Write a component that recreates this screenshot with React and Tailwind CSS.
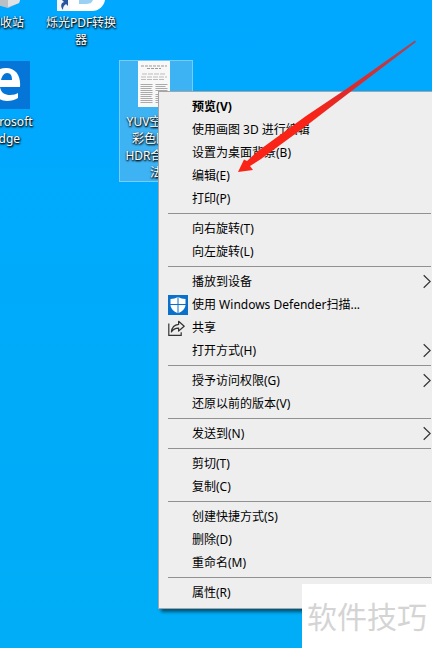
const groups = [
  [
    { label: '预览(V)', bold: true },
    { label: '使用画图 3D 进行编辑' },
    { label: '设置为桌面背景(B)' },
    { label: '编辑(E)' },
    { label: '打印(P)' },
  ],
  [{ label: '向右旋转(T)' }, { label: '向左旋转(L)' }],
  [
    { label: '播放到设备', sub: true },
    { label: '使用 Windows Defender扫描...', icon: 'shield' },
    { label: '共享', icon: 'share' },
    { label: '打开方式(H)', sub: true },
  ],
  [{ label: '授予访问权限(G)', sub: true }, { label: '还原以前的版本(V)' }],
  [{ label: '发送到(N)', sub: true }],
  [{ label: '剪切(T)' }, { label: '复制(C)' }],
  [{ label: '创建快捷方式(S)' }, { label: '删除(D)' }, { label: '重命名(M)' }],
  [{ label: '属性(R)' }],
];

function ShieldIcon() {
  return (
    <svg className="h-5 w-5" viewBox="0 0 20 20" aria-hidden="true">
      <rect width="20" height="20" fill="#0b70c9" />
      <path d="M10 1.800C7.800 3.500 5.300 4 2.500 4v5.500c0 4 3 6.800 7.500 8.800 4.500-2 7.500-4.800 7.500-8.800V4C14.700 4 12.200 3.500 10 1.800z" fill="#fff" />
      <path d="M10 1v18M2 9.500h16" stroke="#0b70c9" strokeWidth="1" />
    </svg>
  );
}

function ShareIcon() {
  return (
    <svg className="h-5 w-5" viewBox="0 0 20 20" fill="none" stroke="#333" strokeWidth="1.200" aria-hidden="true">
      <path d="M.8 5.500v11.900h12.400v-3.200" />
      <path d="M10.600 3.300l5.600 5-5.600 4.700v-2.900c-3.300-.1-5.600 1.200-7.200 3.800.5-4.400 3.300-7.100 7.200-7.500z" strokeLinejoin="round" />
    </svg>
  );
}

function Chevron() {
  return (
    <svg className="h-4 w-2" viewBox="0 0 8 16" fill="none" stroke="#333" strokeWidth="1.200" aria-hidden="true">
      <path d="M.7 1.300l6.500 6.200-6.500 6.200" />
    </svg>
  );
}

function MenuItem({ label, bold, icon, sub }) {
  return (
    <li role="none">
      <button
        type="button"
        role="menuitem"
        className={`flex h-[23px] w-full items-center pl-[9px] pr-px text-left ${bold ? 'font-bold' : ''}`}
      >
        <span className="mr-1 flex w-5 justify-center">
          {icon === 'shield' && <ShieldIcon />}
          {icon === 'share' && <ShareIcon />}
        </span>
        <span className="grow whitespace-nowrap">{label}</span>
        {sub && <Chevron />}
      </button>
    </li>
  );
}

function IconLabel({ lines }) {
  return (
    <span className="block whitespace-nowrap text-center text-[12px] leading-[17px] text-white [text-shadow:1px_1px_2px_#000,0_1px_2px_#000]">
      {lines.map((line) => (
        <span key={line} className="block">{line}</span>
      ))}
    </span>
  );
}

function Desktop() {
  return (
    <>
      <button type="button" className="absolute -left-[32px] top-0 flex w-[76px] flex-col items-center">
        <svg className="h-[14px] w-12" viewBox="0 0 48 14" aria-hidden="true">
          <path d="M6 0h32l-1 3-11 5L8 3z" fill="#b9c0c5" />
          <path d="M26 0h12l-1 3-11 4z" fill="#dfe2e4" />
        </svg>
        <IconLabel lines={['回收站']} />
      </button>

      <button type="button" className="absolute left-[43px] top-0 flex w-[76px] flex-col items-center">
        <svg className="h-[14px] w-12" viewBox="0 0 48 14" aria-hidden="true">
          <path d="M10 0h38c-1 6-6 11-13 11H13z" fill="#fff" />
          <path d="M22 0h14c-1 3-4 4-7 4h-7z" fill="#9bd0f5" />
          <rect y="0" width="13" height="11" fill="#f3f5f8" />
          <path d="M5 0h6v6L9 4C6 6 6 8 6 10 3 6 4 3 7 2z" fill="#25559f" />
        </svg>
        <IconLabel lines={['烁光PDF转换', '器']} />
      </button>

      <button type="button" className="absolute -left-[32px] top-[61px] flex w-[76px] flex-col items-center">
        <svg className="mb-1 h-12 w-12" viewBox="0 0 48 48" aria-hidden="true">
          <rect width="48" height="48" fill="#0575d8" />
          <path d="M8 22C9 12 16 7 24 7c10 0 15 8 14 19H18c1 6 5 8 10 8 4 0 6-1 8-2v5c-3 2-7 3-11 3-9 0-14-7-13-14 0-4 2-8 6-10-5 1-8 3-10 6zm11-3h11c0-4-1-7-5-7-3 0-5 3-6 7z" fill="#fff" />
        </svg>
        <IconLabel lines={['Microsoft', 'Edge']} />
      </button>

      <button type="button" className="absolute left-[119px] top-[60px] flex h-[122px] w-[74px] flex-col items-center border border-[#79ccfa] bg-[#3eb3f4]">
        <svg className="mb-[6px] mr-1 h-[46px] w-8 shrink-0" viewBox="0 0 32 46" aria-hidden="true">
          <rect width="32" height="46" fill="#f8f8f8" />
          <path d="M3 5h26M9 7.500h14" stroke="#999" strokeWidth="1" strokeDasharray="3 1" />
          <path d="M4 13h24M3 16h26M3 18.500h24" stroke="#bbb" strokeWidth="1" strokeDasharray="5 1" />
          <path d="M2.500 23.500h12M2.500 25.500h12M2.500 27.500h11M2.500 29.500h12M2.500 31.500h12M2.500 33.500h12M2.500 35.500h11M2.500 37.500h12M2.500 39.500h12M2.500 41.500h12M17.500 23.500h12M17.500 25.500h10M17.500 27.500h12M17.500 29.500h12M17.500 33.500h12M17.500 35.500h12M17.500 37.500h12M17.500 39.500h11M17.500 41.500h12" stroke="#aaa" />
        </svg>
        <IconLabel lines={['YUV空间的', '彩色图像', 'HDR合成方', '法']} />
      </button>
    </>
  );
}

export default function App() {
  return (
    <main className="relative min-h-screen overflow-hidden bg-linear-to-b from-[#00a8ff] to-[#00adf6] font-['Noto_Sans','Noto_Sans_CJK_SC',sans-serif] text-[12px] text-black">
      <Desktop />

      <nav
        aria-label="文件菜单"
        className="absolute -right-px left-[158px] top-[91px] border border-[#a5a5a5] bg-[#eeeeee] pb-1 pt-[3px] shadow-[3px_3px_3px_rgba(0,0,0,0.5)]"
      >
        {groups.map((group, index) => (
          <div key={group[0].label}>
            {index > 0 && <hr className="my-[3px] ml-[9px] mr-px border-t border-[#919191]" />}
            <ul role="menu">
              {group.map((item) => (
                <MenuItem key={item.label} {...item} />
              ))}
            </ul>
          </div>
        ))}
      </nav>

      <svg className="pointer-events-none absolute left-[237px] top-[40px] h-[134px] w-[180px]" viewBox="0 0 180 134" aria-hidden="true">
        <defs>
          <linearGradient id="arrow" x1="1" y1="0" x2="0" y2="1">
            <stop offset="0" stopColor="#a94457" />
            <stop offset="0.35" stopColor="#dc2b2b" />
            <stop offset="0.6" stopColor="#fa2318" />
          </linearGradient>
        </defs>
        <path d="M178 .500L110 48.500 69 76 21 111 10 121 7 119.500 1 132 16 130 13 126 24 119 69 86 110 54.500 179 2z" fill="url(#arrow)" />
      </svg>

      <div className="absolute bottom-0 right-0 flex h-16 w-[130px] items-center justify-center whitespace-nowrap bg-white text-[30px] font-normal text-[#d4d4d4]">
        软件技巧
      </div>
    </main>
  );
}
